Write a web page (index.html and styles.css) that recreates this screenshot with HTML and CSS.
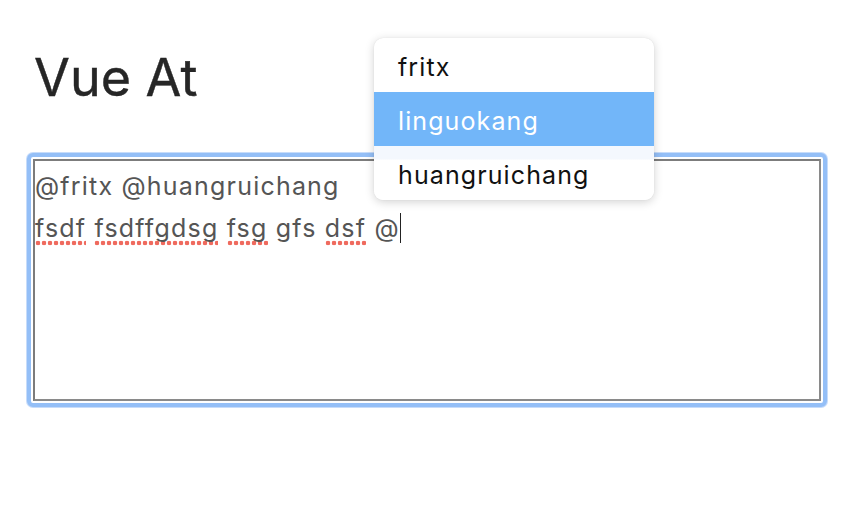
FILE: index.html
```html
<!DOCTYPE html>
<html>
<head>
<meta charset="utf-8">
<link rel="stylesheet" href="styles.css">
</head>
<body>
<div class="page">
  <h1 class="title">Vue At</h1>
  <div class="ring">
    <div class="editor">
      <div class="line">@fritx @huangruichang</div>
      <div class="line"><span class="sp">fsdf</span> <span class="sp">fsdffgdsg</span> <span class="sp">fsg</span> gfs <span class="sp">dsf</span> @<span class="caret"></span></div>
    </div>
  </div>
  <ul class="menu">
    <li class="item">fritx</li>
    <li class="item active">linguokang</li>
    <li class="item tint">huangruichang</li>
  </ul>
</div>
</body>
</html>
```

FILE: styles.css
```css
html, body {
  margin: 0;
  padding: 0;
  background: #fff;
}
.page {
  position: relative;
  width: 852px;
  height: 528px;
  padding: 0 25px 0 27px;
  box-sizing: border-box;
  display: flex;
  flex-direction: column;
  font-family: Inter, "Noto Sans", sans-serif;
}
.title {
  margin: 46px 0 0 7px;
  height: 107px;
  font-size: 52px;
  font-weight: 400;
  line-height: 64px;
  color: #262626;
  letter-spacing: 0;
  -webkit-text-stroke: 0.4px #262626;
}
.ring {
  border: 4px solid #94bff7;
  border-radius: 6px;
  padding: 2px;
  background: #fff;
  height: 242px;
  box-shadow: 0 0 0 1px #c7dcfa;
}
.editor {
  height: 100%;
  box-sizing: border-box;
  border: 2px solid #7c7c7c;
  border-right-color: #8a8a8a;
  border-bottom-color: #8a8a8a;
  padding: 4px 0 0 0;
  color: #555;
  font-size: 25px;
  letter-spacing: 1.2px;
  line-height: 42px;
}
.line {
  height: 42px;
  white-space: pre;
}
.sp {
  padding-bottom: 3px;
  background-image: radial-gradient(circle at 3px 3px, #ef6a5e 2px, rgba(239,106,94,0) 2.6px);
  background-size: 6px 6px;
  background-repeat: repeat-x;
  background-position: 0 100%;
}
.caret {
  display: inline-block;
  width: 1.5px;
  height: 30px;
  background: #222;
  vertical-align: -6px;
  margin-left: 0;
}
.menu {
  position: absolute;
  left: 374px;
  top: 38px;
  width: 280px;
  margin: 0;
  padding: 0;
  list-style: none;
  background: #fff;
  border-radius: 9px;
  overflow: hidden;
  box-shadow: 0 2px 10px rgba(0,0,0,0.18), 0 0 1px rgba(0,0,0,0.12);
}
.item {
  height: 54px;
  box-sizing: border-box;
  padding: 2px 0 0 24px;
  line-height: 54px;
  font-size: 25px;
  letter-spacing: 1.1px;
  color: #111;
}
.item.active {
  background: #72b6f9;
  color: #fff;
}
.item.tint {
  background: linear-gradient(#f4f8fe 0, #f4f8fe 13px, #fff 14px);
}
```
